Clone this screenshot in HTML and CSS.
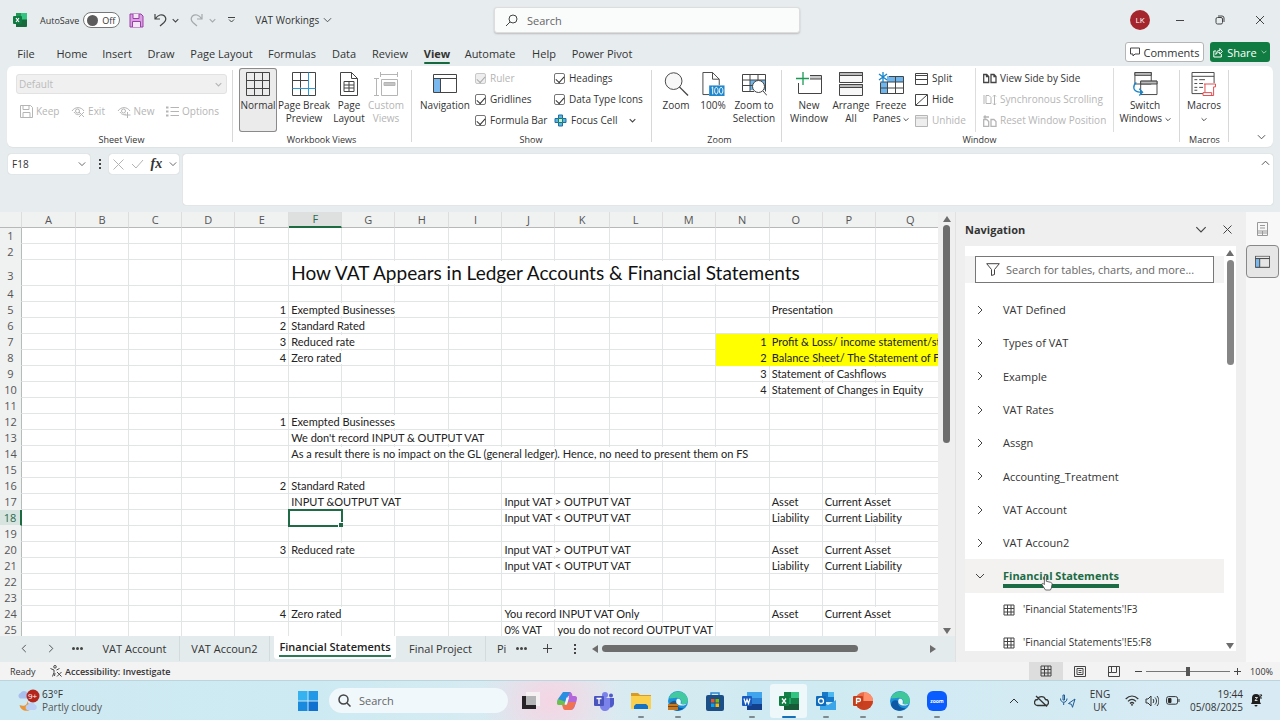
FILE: index.html
```
<!DOCTYPE html>
<html lang="en">
<head>
<meta charset="utf-8">
<title>VAT Workings</title>
<link rel="stylesheet" href="styles.css">
</head>
<body>
<svg class="defs" aria-hidden="true">
  <symbol id="down" viewBox="0 0 10 6"><path d="M1 1l4 4 4-4"/></symbol>
  <symbol id="right" viewBox="0 0 6 10"><path d="M1 1l4 4-4 4"/></symbol>
  <symbol id="grid" viewBox="0 0 12 12"><path d="M1 1h10v10H1zM4.500 1v10M8 1v10M1 4.500h10M1 8h10"/></symbol>
  <symbol id="navpane" viewBox="0 0 24 20"><path d="M1 5h6v14H1z" fill="#7ab8f0" stroke="none"/><path d="M.5.500h23v18H.5zM.5 4.500h23M7.500 4.500v14"/></symbol>
</svg>

<header class="titlebar">
  <svg class="ic xl" viewBox="0 0 14 14"><path d="M3 0h10a1 1 0 0 1 1 1v12a1 1 0 0 1-1 1H3z" fill="#1f9a55"/><path d="M8 0h5a1 1 0 0 1 1 1v5H8z" fill="#35c481"/><path d="M3 7h11v6l-1 1H3z" fill="#176b3c"/><rect y="3" width="9" height="8" rx="1" fill="#0f7a41"/><path d="M3 5l3 4M6 5L3 9" stroke="#fff" stroke-width="1.200"/></svg>
  <label class="autosave"><span>AutoSave</span><button class="switch" type="button" role="switch" aria-checked="false"><i></i>Off</button></label>
  <button class="tb save" aria-label="Save"><svg class="ic" width="15" height="15" viewBox="0 0 15 15"><path d="M1 1h11l2 2v11H1z"/><path d="M4 1v4.500h6V1M3.500 14V8.500h8V14" fill="#f5e6f7"/></svg></button>
  <button class="tb undo" aria-label="Undo"><svg class="ic" width="13" height="14" viewBox="0 0 13 14"><path d="M1 1v5h5M1.200 6C4 1.500 8 .8 10.500 3c2 2.200 1.500 4.500-.5 6.500L6 13" stroke-width="1.200"/></svg></button>
  <svg class="ic sm"><use href="#down"/></svg>
  <button class="tb redo dim" aria-label="Redo"><svg class="ic" width="13" height="14" viewBox="0 0 13 14"><path d="M12 1v5H7M11.800 6C9 1.500 5 .8 2.500 3c-2 2.200-1.500 4.500.5 6.500L7 13" stroke-width="1.200"/></svg></button>
  <svg class="ic sm dim"><use href="#down"/></svg>
  <button class="tb more" aria-label="Customize"><svg class="ic" width="7" height="6" viewBox="0 0 7 6"><path d="M0 .5h7M1 2.500l2.500 2.500L6 2.500"/></svg></button>
  <button class="docname">VAT Workings <svg class="ic" width="9" height="6"><use href="#down"/></svg></button>
  <label class="search"><svg class="ic" width="13" height="13" viewBox="0 0 13 13"><circle cx="8" cy="5" r="4"/><path d="M5 8l-4 4"/></svg><input type="text" placeholder="Search" aria-label="Search"></label>
  <div class="winctl">
    <span class="avatar">LK</span>
    <button aria-label="Minimize"><svg class="ic" width="10" height="10" viewBox="0 0 10 10"><path d="M1 5.500h8"/></svg></button>
    <button aria-label="Restore"><svg class="ic" width="10" height="10" viewBox="0 0 10 10"><rect x="1" y="2.500" width="6.500" height="6.500" rx="1.500"/><path d="M3 1h4a2 2 0 0 1 2 2v4"/></svg></button>
    <button aria-label="Close"><svg class="ic" width="10" height="10" viewBox="0 0 10 10"><path d="M1 1l8 8M9 1L1 9"/></svg></button>
  </div>
</header>

<nav class="tabs">
  <button class="file">File</button><button class="w46">Home</button><button class="w44">Insert</button><button class="w44">Draw</button><button class="w77">Page Layout</button><button class="w64">Formulas</button><button class="w40">Data</button><button class="w52">Review</button><button class="w42 on">View</button><button class="w64">Automate</button><button class="w44">Help</button><button class="w72">Power Pivot</button>
  <div class="tabs-end">
    <button class="comments"><svg class="ic" width="10" height="10" viewBox="0 0 10 10"><path d="M.5 1h9v6H5L3 9V7H.5z"/></svg>Comments</button>
    <button class="share"><svg class="ic" width="10" height="11" viewBox="0 0 10 11"><path d="M3 4H.8v6h7.500V7M2.800 7.500c0-2.500 1.500-4 4-4V1.500l2.500 3-2.500 2.600V5.300c-1.800 0-3 .5-4 2.200z"/></svg>Share<svg class="ic" width="6" height="4"><use href="#down"/></svg></button>
  </div>
</nav>

<section class="ribbon">
  <div class="group g-sheet">
    <div class="body col">
      <div class="combo"><select disabled aria-label="Sheet view"><option>Default</option></select><svg class="ic sm"><use href="#down"/></svg></div>
      <div class="minirow">
        <button disabled><svg class="ic" width="13" height="13" viewBox="0 0 13 13"><path d="M.5.500h10l2 2v10H.5zM3 .5v4h6v-4M3 12V7.500h7V12"/></svg>Keep</button>
        <button disabled><svg class="ic" width="14" height="12" viewBox="0 0 14 12"><path d="M1 5c3-4.500 9-4.500 12 0M3 6c2 3 4 3 6 2"/><circle cx="6.500" cy="5" r="2"/><path d="M8 6l5 5M13 6l-5 5"/></svg>Exit</button>
        <button disabled><svg class="ic" width="14" height="12" viewBox="0 0 14 12"><path d="M1 5c3-4.500 9-4.500 12 0M3 6c2 3 4 3 6 2"/><circle cx="6.500" cy="5" r="2"/><path d="M10.500 6v6M7.500 9h6"/></svg>New</button>
        <button disabled><svg class="ic" width="13" height="11" viewBox="0 0 13 11"><path d="M4.500 1.500H13M4.500 5.500H13M4.500 9.500H13"/><path d="M0 1.500h2.500M0 5.500h2.500M0 9.500h2.500" stroke-width="2"/></svg>Options</button>
      </div>
    </div>
    <div class="cap">Sheet View</div>
  </div>
  <div class="group g-views">
    <div class="body">
      <button class="big b38 sel"><svg class="ic" width="24" height="24" viewBox="0 0 24 24"><path d="M.5.500h23v23H.5zM8.500.500v23M16.500.500v23M.5 8.500h23M.5 16.500h23"/></svg>Normal</button>
      <button class="big b54"><svg class="ic" width="24" height="24" viewBox="0 0 24 24"><path d="M.5.500h23v23H.5zM8.500.500v15M.5 8.500H16M8.500 15.500v8"/><path d="M16.500.500v23M.5 16.500h23" stroke="#2a9bd8"/></svg>Page Break<br>Preview</button>
      <button class="big b36"><svg class="ic" width="18" height="24" viewBox="0 0 18 24"><path d="M.5.500h11l6 6v17H.5zM11.500.500v6h6M4 9.500h10v10H4zM9 9.500v10M4 13h10M4 16h10"/></svg>Page<br>Layout</button>
      <button class="big b38" disabled><svg class="ic" width="24" height="24" viewBox="0 0 24 24"><path d="M6.500 2.500h17M6.500 0v5M23.500 0v5M2.500 7v16M0 6.500h5M0 23.500h5M7.500 7.500h16v16h-16z"/><path d="M10 10.500h11v3H10z" fill="#c4c4c4"/></svg>Custom<br>Views</button>
    </div>
    <div class="cap">Workbook Views</div>
  </div>
  <div class="group g-show">
    <div class="body">
      <button class="big b54"><svg class="ic" width="24" height="24" viewBox="0 -2 24 24"><use href="#navpane" width="24" height="20"/></svg>Navigation</button>
      <div class="checks c1">
        <label class="off"><input type="checkbox" checked disabled>Ruler</label>
        <label><input type="checkbox" checked>Gridlines</label>
        <label><input type="checkbox" checked>Formula Bar</label>
      </div>
      <div class="checks c2">
        <label><input type="checkbox" checked>Headings</label>
        <label><input type="checkbox" checked>Data Type Icons</label>
        <button class="focus"><svg class="ic" width="13" height="13" viewBox="0 0 13 13"><path d="M4.500 1h4v3.500H12v4H8.500V12h-4V8.500H1v-4h3.500z" fill="#5fb3e4" stroke="#1b6fa0"/><path d="M4.500 4.500h4v4h-4z" fill="#c5f0e0" stroke="#18805a"/></svg>Focus Cell<svg class="ic sm"><use href="#down"/></svg></button>
      </div>
    </div>
    <div class="cap">Show</div>
  </div>
  <div class="group g-zoom">
    <div class="body">
      <button class="big b38"><svg class="ic" width="25" height="25" viewBox="0 0 25 25"><circle cx="9.500" cy="9.500" r="8.700" fill="#f8f8f8"/><path d="M15.500 15.500l9 9" stroke-width="1.400"/></svg>Zoom</button>
      <button class="big b36"><svg class="ic" width="24" height="25" viewBox="0 0 24 25"><path d="M8 23.500H1.500V.5h10l7 7v6M11.500.500v7h7"/><path d="M8 14h16v11H8z" fill="#2187cc" stroke="none"/><path d="M10.500 16.500l1.200-.8v7.500M15.500 16c-2.400 0-2.400 7 0 7s2.400-7 0-7zM20.500 16c-2.400 0-2.400 7 0 7s2.400-7 0-7z" stroke="#fff"/></svg>100%</button>
      <button class="big b46"><svg class="ic" width="25" height="24" viewBox="0 0 25 24"><path d="M8 8h15v10H8z" fill="#6db6ef" stroke="none"/><path d="M12 19.500H.5V2.500h23v17M.5 8h23M.5 13.500h10M8 2.500v17M16 2.500V8"/><circle cx="16.500" cy="14.500" r="6" fill="#fff"/><path d="M21 19l4 4.500"/></svg>Zoom to<br>Selection</button>
    </div>
    <div class="cap">Zoom</div>
  </div>
  <div class="group g-window">
    <div class="body">
      <button class="big b44"><svg class="ic" width="26" height="24" viewBox="0 0 26 24"><path d="M14 3h11v4H14z" fill="#ccc" stroke="none"/><path d="M14 3.500h11.500v18h-23V11M14 7h11.500"/><path d="M7 0v13M0 6.500h13" stroke="#1c9a55" stroke-width="1.300"/></svg>New<br>Window</button>
      <button class="big b40"><svg class="ic" width="24" height="24" viewBox="0 0 24 24"><path d="M.5.500h23v10H.5zM.5 12.500h23v11H.5z" fill="#f7f7f7"/><path d="M.5.500h23v3H.5zM.5 12.500h23v3H.5z" fill="#bbb"/></svg>Arrange<br>All</button>
      <button class="big b40"><svg class="ic" width="26" height="24" viewBox="0 0 26 24"><path d="M2 10h7v12H2zM9 4h16v6H9z" fill="#6db6ef" stroke="none"/><path d="M11 4.500h14.500v17h-23V11M2.500 10h23M2.500 16h23M9.500 10v11.500M17.500 4.500v17"/><path d="M5 0v10M1 2l8 6M9 2L1 8" stroke="#1685cc" stroke-width="1.300"/></svg>Freeze<br><span>Panes <svg class="ic mini"><use href="#down"/></svg></span></button>
      <div class="stack s1">
        <button><svg class="ic" width="13" height="12" viewBox="0 0 13 12"><path d="M.5.500h12v11H.5zM.5 2.500h12M.5 6.500h12"/></svg>Split</button>
        <button><svg class="ic" width="13" height="12" viewBox="0 0 13 12"><path d="M.5.500h12v11H.5zM1 11L12 1"/></svg>Hide</button>
        <button disabled><svg class="ic" width="13" height="12" viewBox="0 0 13 12"><path d="M.5.500h12v11H.5zM.5 3h12" fill="#eee"/></svg>Unhide</button>
      </div>
      <div class="stack s2">
        <button><svg class="ic" width="14" height="11" viewBox="0 0 14 11"><path d="M.700 1.500h3l2 2v6h-5zM8 1.500h3l2 2v6H8zM3.500 1.500v2h2M11 1.500v2h2" stroke-width="1.300"/></svg>View Side by Side</button>
        <button disabled><svg class="ic" width="14" height="12" viewBox="0 0 14 12"><path d="M3 1.500h3l2 2v6H3zM1 1v9M11.500 1v10M10 2.500L11.500 1 13 2.500M10 9.500l1.500 1.500L13 9.500"/></svg>Synchronous Scrolling</button>
        <button disabled><svg class="ic" width="14" height="12" viewBox="0 0 14 12"><path d="M.700 4.500h3l2 2v5h-5zM8 4.500h3l2 2v5H8zM1 2h5M2.500.500L1 2l1.500 1.500" stroke-width="1.300"/></svg>Reset Window Position</button>
      </div>
      <button class="big b62"><svg class="ic" width="26" height="25" viewBox="0 0 26 25"><path d="M2.500.500h17v12h-17zM8.500 9.500h17v14h-17z" fill="#fff"/><path d="M2.500.500h17v3h-17zM8.500 9.500h17v3h-17z" fill="#bbb"/><path d="M4 11c-4 3-4 9 3 10H10M7 17.500l3.500 3.500L7 24.500" stroke="#1685cc" stroke-width="1.300"/></svg>Switch<br><span>Windows <svg class="ic mini"><use href="#down"/></svg></span></button>
    </div>
    <div class="cap">Window</div>
  </div>
  <div class="group g-macros">
    <div class="body">
      <button class="big b48"><svg class="ic" width="26" height="25" viewBox="0 0 26 25"><path d="M12 22.500H.5V.5h23v11M.5 4.500h23"/><path d="M3 8h3M8 8h6M3 12h3M8 12h4M3 16h3M8 16h4M3 19h3"/><path d="M13 12.500h12v3h-2v9H12v-3h2v-9M14 21.500h7v3" stroke="#e0474c" fill="#fff"/></svg>Macros<br><span><svg class="ic mini"><use href="#down"/></svg></span></button>
    </div>
    <div class="cap">Macros</div>
  </div>
  <button class="collapse" aria-label="Collapse ribbon"><svg class="ic" width="9" height="6"><use href="#down"/></svg></button>
</section>

<section class="fbar">
  <label class="namebox"><input type="text" value="F18" aria-label="Name box"><svg class="ic" width="8" height="6"><use href="#down"/></svg></label>
  <span class="vdots"><i></i><i></i><i></i></span>
  <div class="fxbox">
    <svg class="ic dim" width="11" height="11" viewBox="0 0 11 11"><path d="M.5.500l10 10M10.500.500l-10 10"/></svg>
    <svg class="ic dim" width="13" height="10" viewBox="0 0 13 10"><path d="M1 5l4 4L12 1"/></svg>
    <em>fx</em>
    <svg class="ic" width="8" height="6"><use href="#down"/></svg>
  </div>
  <div class="formula"><textarea aria-label="Formula"></textarea><svg class="ic flip" width="9" height="6"><use href="#down"/></svg></div>
</section>

<main class="work">
  <div class="sheetside">
    <div class="sheetrow">
      <div class="sheet"><table id="sheet"></table></div>
      <div class="vscroll"><i class="up"></i><b></b><i class="dn"></i></div>
    </div>
    <div class="sheettabs">
      <button class="arrow" aria-label="Previous sheet"><svg class="ic flip" width="6" height="9"><use href="#right"/></svg></button>
      <button class="arrow" aria-label="Next sheet"><svg class="ic" width="6" height="9"><use href="#right"/></svg></button>
      <button class="dots" aria-label="More sheets"><i></i><i></i><i></i></button>
      <button class="st">VAT Account</button>
      <button class="st">VAT Accoun2</button>
      <button class="st active"><span>Financial Statements</span></button>
      <button class="st">Final Project</button>
      <button class="st cut">Pi</button>
      <button class="dots d2" aria-label="More"><i></i><i></i><i></i></button>
      <button class="plus" aria-label="New sheet"><svg class="ic" width="9" height="9" viewBox="0 0 9 9"><path d="M4.500 0v9M0 4.500h9"/></svg></button>
      <span class="vdots"><i></i><i></i><i></i></span>
      <div class="hscroll"><i class="lf"></i><b></b><i class="rt"></i></div>
    </div>
  </div>
  <aside class="pane">
    <div class="panehead"><h2>Navigation</h2><button aria-label="Options"><svg class="ic" width="12" height="7"><use href="#down"/></svg></button><button aria-label="Close"><svg class="ic" width="9" height="9" viewBox="0 0 9 9"><path d="M.5.500l8 8M8.500.500l-8 8"/></svg></button></div>
    <div class="panebody">
      <div class="panelist">
        <div class="filterwrap"><label class="filter"><svg class="ic" width="14" height="13" viewBox="0 0 14 13"><path d="M.7.700h12.600L8.500 6.500v5l-3 1v-6z"/></svg><input type="text" placeholder="Search for tables, charts, and more..." aria-label="Filter"></label></div>
        <ul>
          <li><svg class="ic" width="6" height="10"><use href="#right"/></svg><span>VAT Defined</span></li>
          <li><svg class="ic" width="6" height="10"><use href="#right"/></svg><span>Types of VAT</span></li>
          <li><svg class="ic" width="6" height="10"><use href="#right"/></svg><span>Example</span></li>
          <li><svg class="ic" width="6" height="10"><use href="#right"/></svg><span>VAT Rates</span></li>
          <li><svg class="ic" width="6" height="10"><use href="#right"/></svg><span>Assgn</span></li>
          <li><svg class="ic" width="6" height="10"><use href="#right"/></svg><span>Accounting_Treatment</span></li>
          <li><svg class="ic" width="6" height="10"><use href="#right"/></svg><span>VAT Account</span></li>
          <li><svg class="ic" width="6" height="10"><use href="#right"/></svg><span>VAT Accoun2</span></li>
          <li class="cur"><svg class="ic" width="10" height="6"><use href="#down"/></svg><span>Financial Statements</span>
            <svg class="hand" width="12" height="17" viewBox="0 0 12 17"><path d="M3.500 1.500c.8-.8 1.800-.2 1.800.8v5l4.200 1c1.200.3 1.700 1 1.500 2.200l-.6 3.500-1 2H4.500L1.200 11c-.8-1.300.4-2 1.300-1.300l.8.800z" fill="#fff" stroke="#444" stroke-width=".8"/></svg></li>
          <li class="sub"><svg class="ic" width="12" height="12"><use href="#grid"/></svg><span>'Financial Statements'!F3</span></li>
          <li class="sub"><svg class="ic" width="12" height="12"><use href="#grid"/></svg><span>'Financial Statements'!E5:F8</span></li>
        </ul>
      </div>
      <div class="pscroll"><i class="up"></i><b></b><i class="dn"></i></div>
    </div>
  </aside>
  <div class="rail">
    <button aria-label="Notes"><svg class="ic gray" width="11" height="14" viewBox="0 0 11 14"><path d="M.5.500h10v13H.5zM3 3.500h5M3 6h5M.5 9h10M.5 11h10M5.500 9v4"/></svg></button>
    <button class="on" aria-label="Navigation"><svg class="ic" width="15" height="14" viewBox="0 0 24 20"><use href="#navpane" width="24" height="20" stroke-width="1.600"/></svg></button>
  </div>
</main>

<footer class="status">
  <span class="ready">Ready</span>
  <button class="acc"><svg class="ic" width="12" height="12" viewBox="0 0 12 12"><circle cx="5" cy="1.800" r="1.300"/><path d="M.5 3.500L4 5v2.500L2.500 11.500M9.500 3.500L6.500 5M5 8L4.500 11M7 7l4.500 4.500M11.500 7L7 11.500"/></svg>Accessibility: Investigate</button>
  <div class="views">
    <button class="on" aria-label="Normal"><svg class="ic" width="12" height="12"><use href="#grid"/></svg></button>
    <button aria-label="Page layout"><svg class="ic" width="12" height="11" viewBox="0 0 12 11"><path d="M.5.500h11v10H.5zM3 2.500h6v6H3zM4.500 4.500h3M4.500 6.500h3"/></svg></button>
    <button aria-label="Page break"><svg class="ic" width="12" height="11" viewBox="0 0 12 11"><path d="M.5.500h11v10H.5zM3.500.500v6H.5M3.500 6.500h5v-6"/></svg></button>
  </div>
  <div class="zoomer"><button aria-label="Zoom out"><svg class="ic" width="7" height="7" viewBox="0 0 7 7"><path d="M0 3.500h7"/></svg></button><input type="range" min="0" max="100" value="50" aria-label="Zoom"><button aria-label="Zoom in"><svg class="ic" width="7" height="7" viewBox="0 0 7 7"><path d="M0 3.500h7M3.500 0v7"/></svg></button></div>
  <span class="pct">100%</span>
</footer>

<footer class="taskbar">
  <button class="weather">
    <svg width="24" height="24" viewBox="0 0 24 24"><path d="M3 9.500a3 3 0 0 1 .5-5.500 4 4 0 0 1 7 0v5.500z" fill="#a9c0ee"/><path d="M10 12c1 4-3 6-7.500 4 1 6 9 8 12 3z" fill="#e8953a"/><path d="M10 21a3 3 0 0 1 1-5.500 4 4 0 0 1 7 0 3 3 0 0 1 0 5.500z" fill="#bccff5"/><circle cx="16" cy="7" r="6.500" fill="#b3261e"/><text x="11" y="10" font-size="8" fill="#fff">9+</text></svg>
    <span>63°F<br><small>Partly cloudy</small></span>
  </button>
  <div class="apps">
    <button aria-label="Start"><svg width="20" height="20" viewBox="0 0 20 20"><path d="M0 0h9.500v9.500H0z" fill="#35b2ef"/><path d="M10.500 0H20v9.500h-9.500z" fill="#2398e6"/><path d="M0 10.500h9.500V20H0z" fill="#1a8adf"/><path d="M10.500 10.500H20V20h-9.500z" fill="#0f70cf"/></svg></button>
    <label class="tsearch"><svg class="ic" width="13" height="13" viewBox="0 0 13 13"><circle cx="5.500" cy="5.500" r="4.500" stroke-width="1.500"/><path d="M9 9l3.500 3.500" stroke-width="1.500"/></svg><input type="text" placeholder="Search" aria-label="Search Windows"></label>
    <button aria-label="Task view"><svg width="20" height="20" viewBox="0 0 20 20"><path d="M6 1h14v14H6z" fill="#f6f0f3"/><path d="M2 5h4v9h10v4H2z" fill="#262226"/><path d="M6 5h10v9H6z" fill="#b5b5b8"/></svg></button>
    <button aria-label="Copilot"><svg width="20" height="20" viewBox="0 0 20 20"><path d="M6 1h7l2 4h-4L8 14H3c-3 0-3-3-2-6z" fill="#2a8fe0"/><path d="M1 8l-1 4c0 2 1 2 3 2h5l1-3z" fill="#6dc04d"/><path d="M13 1c1 0 2 1 2.500 4H18c2 0 2.500 2 1.500 5l-2 6c-1 2-2 3-4 3H8L12 5h-1z" fill="#b467d8"/><path d="M5 14h4l3-3h7l-2 5c-1 2-2 3-4 3H8c-2 0-2-3-3-5z" fill="#f07250"/><path d="M9.500 6.500h2.500l-2 7H7.500z" fill="#eef3f8"/></svg></button>
    <button aria-label="Teams"><svg width="20" height="20" viewBox="0 0 20 20"><circle cx="11" cy="4" r="3" fill="#7b83eb"/><circle cx="17" cy="4.500" r="2" fill="#5059c9"/><path d="M13 7h7v6a4 4 0 0 1-6 3z" fill="#5059c9"/><path d="M6 7h10v7a5 5 0 0 1-10 2z" fill="#7b83eb"/><rect y="5" width="10" height="10" rx="1" fill="#4b53bc"/><path d="M2.500 7.500h5M5 7.500V13" stroke="#fff" stroke-width="1.300"/></svg></button>
    <button class="run" aria-label="Explorer"><svg width="20" height="20" viewBox="0 0 20 20"><path d="M0 2h7l2 2h11v5H0z" fill="#d99c20"/><path d="M0 5h20v13H0z" fill="#fbd04d"/><path d="M3 18v-3l2-2h10l2 2v3z" fill="#1673c4"/></svg></button>
    <button class="run" aria-label="Edge work"><svg width="20" height="20" viewBox="0 0 20 20"><circle cx="10" cy="10" r="10" fill="#1c8fd6"/><path d="M1 7C4-2 18-2 20 9c0 4-4 5-7 4 2-4-2-7-6-6-3 0-5 1-6 0z" fill="#42c9a0"/><path d="M8 10c-1 5 4 8 8 7-4 4-13 4-15-3 2-4 5-5 7-4z" fill="#0d5aa8"/><path d="M12.500 12.500C14 9 11 7 9 8c-2 3 0 6 4 6.500 3 .3 5-.5 6-2-2 1-5 1.500-6.500 0z" fill="#e8f6fb"/><path d="M0 13h10v6H0z" fill="#c47a24"/><path d="M3 13v-1.500h4V13M0 15.500h10" fill="none" stroke="#7a4510"/></svg></button>
    <button aria-label="Store"><svg width="20" height="20" viewBox="0 0 20 20"><path d="M6 5V2h8v3" fill="none" stroke="#2f87cf" stroke-width="1.500"/><rect x="1" y="4" width="18" height="16" rx="2" fill="#1d4f87"/><path d="M6 8h3.500v3.500H6z" fill="#f25022"/><path d="M10.500 8H14v3.500h-3.500z" fill="#7fba00"/><path d="M6 12.500h3.500V16H6z" fill="#00a4ef"/><path d="M10.500 12.500H14V16h-3.500z" fill="#ffb900"/></svg></button>
    <button class="run" aria-label="Word"><svg width="20" height="20" viewBox="0 0 20 20"><path d="M5 1h15v6H5z" fill="#41a5ee"/><path d="M5 7h15v6H5z" fill="#2b7cd3"/><path d="M5 13h15v6H5z" fill="#143f8a"/><rect y="5" width="10" height="10" rx="1" fill="#185abd"/><path d="M2 7.500L3.500 12.500 5 8.500l1.500 4L8 7.500" fill="none" stroke="#fff" stroke-width="1.200"/></svg></button>
    <button class="run now" aria-label="Excel"><svg width="20" height="20" viewBox="0 0 20 20"><path d="M5 1h15v18H5z" fill="#21a366"/><path d="M12 1h8v6h-8z" fill="#33c481"/><path d="M5 1h7v6H5zM12 7h8v6h-8z" fill="#158048"/><path d="M5 13h15v6H5z" fill="#185c37"/><rect y="5" width="10" height="10" rx="1" fill="#107c41"/><path d="M3 7.500l4 5M7 7.500l-4 5" stroke="#fff" stroke-width="1.300"/></svg></button>
    <button class="run" aria-label="Outlook"><svg width="20" height="20" viewBox="0 0 20 20"><path d="M6 1h12v10H6z" fill="#1a78c8"/><path d="M12 1h6v5h-6z" fill="#4bb9f0"/><path d="M4 9l8 5 8-5v10H4z" fill="#3aa5e8"/><rect y="5" width="10" height="10" rx="1" fill="#0f6cbd"/><circle cx="5" cy="10" r="2.500" fill="none" stroke="#fff" stroke-width="1.300"/></svg></button>
    <button class="run" aria-label="PowerPoint"><svg width="20" height="20" viewBox="0 0 20 20"><circle cx="11" cy="10" r="9" fill="#ed6c47"/><path d="M11 1a9 9 0 0 1 9 9h-9z" fill="#ff8f6b"/><path d="M2 10h18a9 9 0 0 1-18 0z" fill="#c8401f"/><rect y="5" width="10" height="10" rx="1" fill="#c43e1c"/><path d="M3.500 13V7.500H6a1.500 1.500 0 0 1 0 3H3.500" fill="none" stroke="#fff" stroke-width="1.300"/></svg></button>
    <button class="run" aria-label="Edge"><svg width="20" height="20" viewBox="0 0 20 20"><circle cx="10" cy="10" r="10" fill="#1c8fd6"/><path d="M1 7C4-2 18-2 20 9c0 4-4 5-7 4 2-4-2-7-6-6-3 0-5 1-6 0z" fill="#3fc79a"/><path d="M8 10c-1 5 4 8 8 7-4 4-13 4-15-3 0-4 4-6 7-4z" fill="#0d57a5"/><path d="M12.500 12.500C14 9 11 7 9 8c-2 3 0 6 4 6.500 3 .3 5-.5 6-2-2 1-5 1.500-6.500 0z" fill="#e8f6fb"/></svg></button>
    <button class="run" aria-label="Zoom"><svg width="20" height="20" viewBox="0 0 20 20"><rect width="20" height="20" rx="6" fill="#0b5cff"/><text x="10" y="12" font-size="5" font-weight="700" fill="#fff" text-anchor="middle">zoom</text></svg></button>
  </div>
  <div class="tray">
    <svg class="ic flip" width="10" height="6"><use href="#down"/></svg>
    <svg class="ic cloud" width="15" height="12" viewBox="0 0 15 12"><path d="M3.500 10.500a3 3 0 0 1 0-6 4.200 4.200 0 0 1 8 0 3 3 0 0 1 0 6zM2 1l11 10.500" stroke-width="1.300"/></svg>
    <svg class="ic mic" width="18" height="14" viewBox="0 0 18 14"><path d="M4 1h1.500v5H4zM1.500 4.500c0 5 6.500 5 6.500 0M4.700 8.500V11M16 5l-6.500 4.500 3 .8 1 3z"/></svg>
    <span class="lang">ENG<br>UK</span>
    <svg class="ic wifi" width="14" height="11" viewBox="0 0 14 11"><path d="M.700 4c4-4 8.600-4 12.600 0M3 6.300c2.500-2.500 5.500-2.500 8 0M5 8.500c1.300-1.300 2.700-1.300 4 0" stroke-width="1.200"/><circle cx="7" cy="9.800" r=".6"/></svg>
    <svg class="ic spk" width="14" height="12" viewBox="0 0 14 12"><path d="M1 4h2l3-3v10L3 8H1zM8 4c1 1.300 1 2.700 0 4M10 2.500c2 2 2 5 0 7M12 1c2.500 3 2.500 7 0 10"/></svg>
    <svg class="ic bat" width="14" height="9" viewBox="0 0 14 9"><rect x=".6" y=".6" width="11" height="7.600" rx="2"/><path d="M2.500 2.500H5v4H2.500z" fill="#222"/><path d="M13 3v3"/></svg>
    <span class="clock">19:44<br>05/08/2025</span>
    <svg class="bell" width="13" height="13" viewBox="0 0 13 13"><path d="M2 4a4 4 0 0 1 8 0v4l1 2H1l1-2zM4.500 11h3a1.500 1.500 0 0 1-3 0z" fill="#1f1f1f"/><path d="M9.500 1H12L9.500 4H12" stroke="#1f1f1f" fill="none"/><path d="M5 3.500h2.500L5 6.500h2.500" stroke="#fff" fill="none" stroke-width=".8"/></svg>
  </div>
</footer>
<script src="sheet.js"></script>
</body>
</html>
```

FILE: styles.css
```
* { box-sizing: border-box; }
html, body { height: 100%; }
body { margin: 0; display: flex; flex-direction: column; overflow: hidden; background: #e7edef; color: #333; font: 11px/13px "Open Sans", "Noto Sans", sans-serif; }
button, input, select, textarea { font: inherit; color: inherit; background: none; border: 0; padding: 0; margin: 0; outline: 0; }
button { display: flex; align-items: center; justify-content: center; white-space: nowrap; }
.defs { display: none; }
.ic { fill: none; stroke: #444; flex: none; }
svg text { font-family: "Open Sans", sans-serif; }
.sm { width: 7px; height: 5px; stroke-width: 1.5; }
.mini { width: 6px; height: 5px; stroke-width: 1.6; }
.dim { opacity: .4; }
.flip { transform: rotate(180deg); }
::placeholder { color: #666; opacity: 1; }

.titlebar { height: 40px; flex: none; display: flex; align-items: center; padding-left: 13px; position: relative; font-size: 10px; }
.xl { width: 14px; height: 14px; stroke: none; }
.autosave { display: flex; align-items: center; gap: 4px; margin-left: 13px; font-size: 9px; }
.switch { width: 37px; height: 16px; border: 1px solid #777; border-radius: 8px; background: #fff; justify-content: flex-start; gap: 4px; padding-left: 3px; font-size: 9px; }
.switch i { width: 11px; height: 11px; border-radius: 6px; background: #5c5c5c; }
.save { margin-left: 9px; }
.save .ic { stroke: #9b3fa8; fill: #d9a0e2; }
.undo { margin: 0 5px 0 10px; }
.redo { margin: 0 6px 0 11px; }
.more { margin: 0 20px 0 12px; }
.docname { gap: 4px; font-size: 10px; }
.search { position: absolute; left: 50%; top: 7px; width: 306px; height: 26px; margin-left: -146px; background: #fafbfb; border: 1px solid #ddd; border-radius: 3px; box-shadow: 0 1px 2px #bbb; display: flex; align-items: center; gap: 9px; padding-left: 10px; font-size: 11px; }
.winctl { margin-left: auto; display: flex; align-items: center; }
.winctl button { width: 40px; height: 32px; }
.avatar { width: 20px; height: 20px; border-radius: 10px; background: #a4262c; color: #fff; font-size: 8px; line-height: 20px; text-align: center; margin-right: 10px; }

.tabs { height: 26px; flex: none; display: flex; align-items: stretch; padding: 1px 10px 0 7px; font-size: 11px; }
.tabs > button { position: relative; padding-bottom: 1px; }
.file { width: 38px; margin-right: 4px; }
.w40 { width: 40px; } .w42 { width: 42px; } .w44 { width: 44px; } .w46 { width: 46px; } .w52 { width: 52px; } .w64 { width: 64px; } .w72 { width: 72px; } .w77 { width: 77px; }
.tabs .on { font-weight: 700; }
.tabs .on::after { content: ""; position: absolute; left: 8px; right: 8px; bottom: 2px; height: 2px; background: #16693f; border-radius: 1px; }
.tabs-end { margin-left: auto; display: flex; gap: 6px; align-items: flex-start; padding-top: 1px; }
.comments { width: 79px; height: 20px; border: 1px solid #b5b5b5; border-radius: 3px; background: #fff; gap: 4px; font-size: 11px; }
.share { width: 60px; height: 20px; border-radius: 3px; background: #107c41; color: #fff; gap: 4px; font-size: 11px; }
.share .ic { stroke: #fff; }

.ribbon { flex: none; height: 81px; margin: 0 7px; background: #fff; border-radius: 6px; display: flex; position: relative; font-size: 10px; box-shadow: 0 1px 1px #dde2e4; }
.group { display: flex; flex-direction: column; position: relative; padding-top: 2px; }
.group::after { content: ""; position: absolute; right: 0; top: 4px; bottom: 5px; width: 1px; background: #d8d8d8; }
.body { display: flex; height: 65px; }
.cap { text-align: center; font-size: 9px; line-height: 13px; }
.g-sheet { width: 226px; padding-left: 9px; padding-right: 6px; }
.g-views { width: 179px; padding-left: 6px; }
.g-show { width: 240px; padding-left: 6px; }
.g-zoom { width: 130px; padding-left: 5px; }
.g-window { width: 398px; padding-left: 5px; }
.g-macros { width: 49px; }
.g-views .cap, .g-show .cap, .g-window .cap { padding-right: 8px; }
.col { flex-direction: column; }
.combo { display: flex; align-items: center; height: 20px; margin-top: 6px; background: #f0f0f0; border: 1px solid #e2e2e2; border-radius: 3px; padding: 0 4px 0 2px; }
.combo select { flex: 1; appearance: none; color: #bbb; opacity: 1; }
.combo .ic, button:disabled .ic { stroke: #b5b5b5; }
button:disabled { color: #b5b5b5; }
.minirow { display: flex; justify-content: space-between; padding: 11px 8px 0 4px; }
.minirow button { gap: 3px; }
.big { flex-direction: column; justify-content: flex-start; height: 64px; padding-top: 4px; border-radius: 3px; text-align: center; line-height: 13px; }
.big > .ic:first-child { height: 24px; margin-bottom: 3px; }
.big.sel { background: #ebebeb; box-shadow: inset 0 0 0 1px #8a8a8a; }
.b36 { width: 36px; } .b38 { width: 38px; } .b40 { width: 40px; } .b44 { width: 44px; } .b46 { width: 46px; } .b48 { width: 48px; } .b54 { width: 54px; } .b62 { width: 62px; }
.checks, .stack { display: flex; flex-direction: column; height: 64px; }
.checks > *, .stack > * { height: 21px; display: flex; align-items: center; justify-content: flex-start; gap: 4px; white-space: nowrap; }
.c1 { width: 79px; margin-left: 3px; }
.c2 { width: 92px; }
.off { color: #b5b5b5; }
input[type=checkbox] { appearance: none; width: 11px; height: 11px; border: 1px solid #777; border-radius: 2px; position: relative; }
input[type=checkbox]::after { content: ""; position: absolute; left: 1px; top: 2px; width: 7px; height: 4px; border: solid #333; border-width: 0 0 1px 1px; transform: rotate(-48deg); }
input[type=checkbox]:disabled { border-color: #c8c8c8; background: #eee; }
input[type=checkbox]:disabled::after { border-color: #aaa; }
.focus .sm { margin-left: 8px; }
.s1 { width: 61px; margin-left: 4px; border-right: 1px solid #ddd; }
.s2 { width: 138px; padding-left: 7px; border-right: 1px solid #ddd; }
.s2 > * { gap: 3px; }
.collapse { position: absolute; right: 7px; bottom: 7px; }

.fbar { flex: none; height: 65px; padding: 7px 7px 7px 8px; display: flex; align-items: flex-start; font-size: 10px; }
.namebox { width: 82px; height: 20px; background: #fff; border-radius: 3px; display: flex; align-items: center; padding: 0 4px 0 4px; box-shadow: 0 0 1px #aaa; }
.namebox input { flex: 1; min-width: 0; }
.vdots { width: 19px; height: 20px; display: flex; flex-direction: column; align-items: center; justify-content: center; gap: 2px; }
.vdots i { width: 2px; height: 2px; background: #444; }
.fxbox { width: 70px; height: 20px; background: #fff; border-radius: 3px; display: flex; align-items: center; justify-content: space-between; padding: 0 2px 0 4px; box-shadow: 0 0 1px #aaa; }
.fxbox em { font: italic 700 14px "Liberation Serif", serif; }
.formula { flex: 1; margin-left: 4px; height: 51px; background: #fff; border-radius: 3px; box-shadow: 0 0 1px #aaa; display: flex; align-items: flex-start; padding: 6px 3px 0 4px; }
.formula textarea { flex: 1; height: 40px; resize: none; }

.work { flex: 1; min-height: 0; display: flex; }
.sheetside { flex: 1; min-width: 0; display: flex; flex-direction: column; background: #e3ebec; }
.sheetrow { flex: 1; min-height: 0; display: flex; background: #efefef; }
.sheet { flex: 1; min-width: 0; overflow: hidden; background: #fff; }
table { border-collapse: separate; border-spacing: 0; table-layout: fixed; width: 946px; font: 11px/14px Lato, "Open Sans", sans-serif; color: #222; }
th, td { padding: 0; height: 16px; border: solid #e1e5e5; border-width: 0 1px 1px 0; white-space: nowrap; }
th { font: 11px/14px "Open Sans", sans-serif; color: #555; background: #f0f1f1; text-align: center; }
thead th { border-color: #ddd; border-bottom-color: #b8b8b8; }
tbody th { border-right-color: #b5bcbc; border-bottom-color: #f0f1f1; }
thead th.cur { background: #dedfdf; color: #2b6b4c; border-bottom: 2px solid #1d6b41; }
tbody th.cur { background: #d8e4e0; color: #2b6b4c; border-right: 2px solid #1d6b41; }
td span { position: relative; background: #fff; padding-right: 1px; }
td { padding-left: 2px; }
td.num { text-align: right; padding-right: 1px; }
tr.tall td, tr.tall th { height: 26px; }
tr.tall th { vertical-align: bottom; padding-bottom: 2px; }
tr.tall td { font-size: 19px; line-height: 24px; color: #111; }
td.hl { background: #ff0; border-color: #ff0; }
td.hl span { background: #ff0; }
td.active { position: relative; outline: 2px solid #1f6b46; outline-offset: -1px; }
td.active::after { content: ""; position: absolute; right: -2px; bottom: -2px; width: 4px; height: 4px; background: #1f6b46; border: solid #fff; border-width: 1px 0 0 1px; }

.vscroll, .pscroll { width: 17px; display: flex; flex-direction: column; align-items: center; padding: 4px 0 2px; }
.vscroll b { width: 7px; height: 218px; border-radius: 4px; background: #6d6d6d; margin-top: 3px; }
.up, .dn { width: 0; height: 0; border: solid transparent; border-width: 0 4px; }
.up { border-bottom: 6px solid #6d6d6d; }
.dn { border-top: 6px solid #6d6d6d; margin-top: auto; }

.sheettabs { height: 26px; flex: none; display: flex; align-items: flex-start; padding-left: 10px; font-size: 11px; }
.sheettabs > * { height: 25px; }
.arrow { width: 27px; }
.dots { gap: 1px; width: 26px; }
.dots i { width: 3px; height: 3px; border-radius: 2px; background: #444; }
.st { width: 90px; border-right: 1px solid #d3dbdc; }
.st.active { width: 122px; height: 23px; background: #fff; border: 0; border-radius: 0 0 3px 3px; margin-left: 4px; font-weight: 600; color: #222; }
.st.active span { border-bottom: 2px solid #2c7a55; line-height: 16px; }
.st.cut { width: 22px; justify-content: flex-start; padding-left: 11px; border: 0; }
.d2 { width: 26px; }
.plus { width: 27px; }
.sheettabs .vdots { width: 27px; }
.hscroll { flex: 1; display: flex; align-items: center; padding: 0 19px 0 4px; }
.hscroll b { width: 256px; height: 7px; border-radius: 4px; background: #6d6d6d; margin-left: 4px; }
.lf, .rt { border: solid transparent; border-width: 4px 0; }
.lf { border-right: 6px solid #6d6d6d; }
.rt { border-left: 6px solid #6d6d6d; margin-left: auto; }

.pane { width: 291px; flex: none; background: #efefef; border-left: 1px solid #e0e2e2; padding: 0 10px 11px 9px; display: flex; flex-direction: column; }
.panehead { height: 34px; flex: none; display: flex; align-items: center; gap: 16px; padding-right: 4px; }
.panehead h2 { margin: 0 auto 0 0; font-size: 11px; font-weight: 700; }
.panebody { flex: 1; min-height: 0; display: flex; background: #fff; }
.panelist { flex: 1; min-width: 0; overflow: hidden; padding-top: 10px; }
.filterwrap { background: #f3f3f3; padding: 0 10px; }
.filter { height: 27px; border: 1px solid #777; background: #fff; display: flex; align-items: center; gap: 6px; padding-left: 10px; font-size: 11px; }
.filter input { flex: 1; min-width: 0; }
.pscroll { width: 12px; }
.pscroll b { width: 7px; height: 105px; border-radius: 4px; background: #858585; margin-top: 4px; }
ul { list-style: none; margin: 10px 0 0; padding: 0; font-size: 11px; }
li { height: 33px; display: flex; align-items: center; padding-left: 12px; gap: 20px; position: relative; white-space: nowrap; }
li:nth-child(3n) { height: 34px; }
li.cur { background: #f3f2f1; padding-left: 10px; gap: 18px; color: #1b6b45; font-weight: 700; }
li.cur span { border-bottom: 4px solid #1b6b45; line-height: 16px; padding-top: 3px; }
li.sub { font-size: 10px; padding-left: 38px; gap: 8px; }
.hand { position: absolute; left: 76px; top: 15px; }
.rail { width: 34px; flex: none; background: #f8f8f8; }
.rail button { width: 33px; height: 33px; }
.rail .on { border: 1px solid #888; border-radius: 4px; background: #e6e6e6; }
.gray { stroke: #999; }

.status { height: 18px; flex: none; background: #f3f3f3; display: flex; align-items: center; font-size: 9px; padding-right: 7px; }
.ready { width: 50px; padding-left: 10px; }
.acc { gap: 3px; font-weight: 600; }
.views { margin-left: auto; display: flex; }
.views button { width: 34px; height: 18px; }
.views .on { background: #ddd; }
.zoomer { display: flex; align-items: center; margin-left: 4px; gap: 4px; }
.zoomer input { appearance: none; width: 84px; height: 11px; background: linear-gradient(#777, #777) center / 100% 1px no-repeat; }
.zoomer input::-webkit-slider-thumb { appearance: none; width: 4px; height: 9px; background: #555; }
.pct { margin-left: 9px; }

.taskbar { height: 40px; flex: none; display: flex; align-items: center; position: relative; border-top: 1px solid #bcd4dc; background: radial-gradient(ellipse 70px 60px at 43% 50%, #f5d5e3, transparent), linear-gradient(90deg, #cfe9f2, #cdeaf3 25%, #dcebf1 45%, #cfeaf2 60%, #d8ebf5); font-size: 10px; }
.weather { position: absolute; left: 17px; gap: 1px; text-align: left; }
.weather small { font-size: 10px; color: #555; }
.apps { display: flex; align-items: center; margin: 0 auto; padding-right: 36px; }
.apps button { width: 37px; height: 34px; position: relative; }
.run::after { content: ""; position: absolute; left: 50%; bottom: 0; width: 6px; height: 2px; margin-left: -3px; background: #7d8a90; border-radius: 1px; }
.now { background: #eef7fa; border-radius: 3px; }
.now::after { width: 14px; margin-left: -7px; background: #1570b8; }
.tsearch { width: 179px; height: 25px; border-radius: 13px; background: #f0f8fb; display: flex; align-items: center; gap: 8px; padding-left: 9px; margin: 0 3px; font-size: 11px; }
.tsearch input { width: 120px; }
.tray { position: absolute; right: 17px; display: flex; align-items: center; text-align: center; }
.tray .ic { stroke: #333; }
.cloud { margin-left: 15px; }
.tray .mic { margin-left: 10px; stroke: #1c5a94; }
.lang { margin-left: 11px; width: 24px; }
.wifi { margin-left: 13px; }
.spk { margin-left: 6px; }
.bat { margin-left: 7px; }
.clock { text-align: right; width: 63px; }
.bell { margin-left: 7px; }
```

FILE: sheet.js
```
const widths = [22, 54, 53, 53, 53, 54, 53, 53, 54, 53, 53, 54, 53, 53, 54, 53, 53, 70];
const letters = 'ABCDEFGHIJKLMNOPQ';
const cells = {
  F3: 'How VAT Appears in Ledger Accounts & Financial Statements',
  E5: 1, F5: 'Exempted Businesses', O5: 'Presentation',
  E6: 2, F6: 'Standard Rated',
  E7: 3, F7: 'Reduced rate', N7: 1, O7: 'Profit & Loss/ income statement/sta',
  E8: 4, F8: 'Zero rated', N8: 2, O8: 'Balance Sheet/ The Statement of Fi',
  N9: 3, O9: 'Statement of Cashflows',
  N10: 4, O10: 'Statement of Changes in Equity',
  E12: 1, F12: 'Exempted Businesses',
  F13: "We don't record INPUT & OUTPUT VAT",
  F14: 'As a result there is no impact on the GL (general ledger). Hence, no need to present them on FS',
  E16: 2, F16: 'Standard Rated',
  F17: 'INPUT &OUTPUT VAT', J17: 'Input VAT > OUTPUT VAT', O17: 'Asset', P17: 'Current Asset',
  J18: 'Input VAT < OUTPUT VAT', O18: 'Liability', P18: 'Current Liability',
  E20: 3, F20: 'Reduced rate', J20: 'Input VAT > OUTPUT VAT', O20: 'Asset', P20: 'Current Asset',
  J21: 'Input VAT < OUTPUT VAT', O21: 'Liability', P21: 'Current Liability',
  E24: 4, F24: 'Zero rated', J24: 'You record INPUT VAT Only', O24: 'Asset', P24: 'Current Asset',
  J25: '0% VAT', K25: 'you do not record OUTPUT VAT'
};

const table = document.getElementById('sheet');
const group = document.createElement('colgroup');
widths.forEach(w => {
  const col = document.createElement('col');
  col.style.width = w + 'px';
  group.append(col);
});
table.append(group);

const head = table.createTHead().insertRow();
head.append(document.createElement('th'));
for (const letter of letters) {
  const th = document.createElement('th');
  th.textContent = letter;
  if (letter === 'F') th.className = 'cur';
  head.append(th);
}

const body = table.createTBody();
for (let r = 1; r <= 25; r++) {
  const row = body.insertRow();
  if (r === 3) row.className = 'tall';
  const th = document.createElement('th');
  th.textContent = r;
  if (r === 18) th.className = 'cur';
  row.append(th);
  for (const letter of letters) {
    const td = row.insertCell();
    const value = cells[letter + r];
    if (value !== undefined) {
      const span = document.createElement('span');
      span.textContent = value;
      td.append(span);
      if (typeof value === 'number') td.classList.add('num');
    }
    if ((r === 7 || r === 8) && letter >= 'N') td.classList.add('hl');
    if (letter + r === 'F18') td.classList.add('active');
  }
}
```
